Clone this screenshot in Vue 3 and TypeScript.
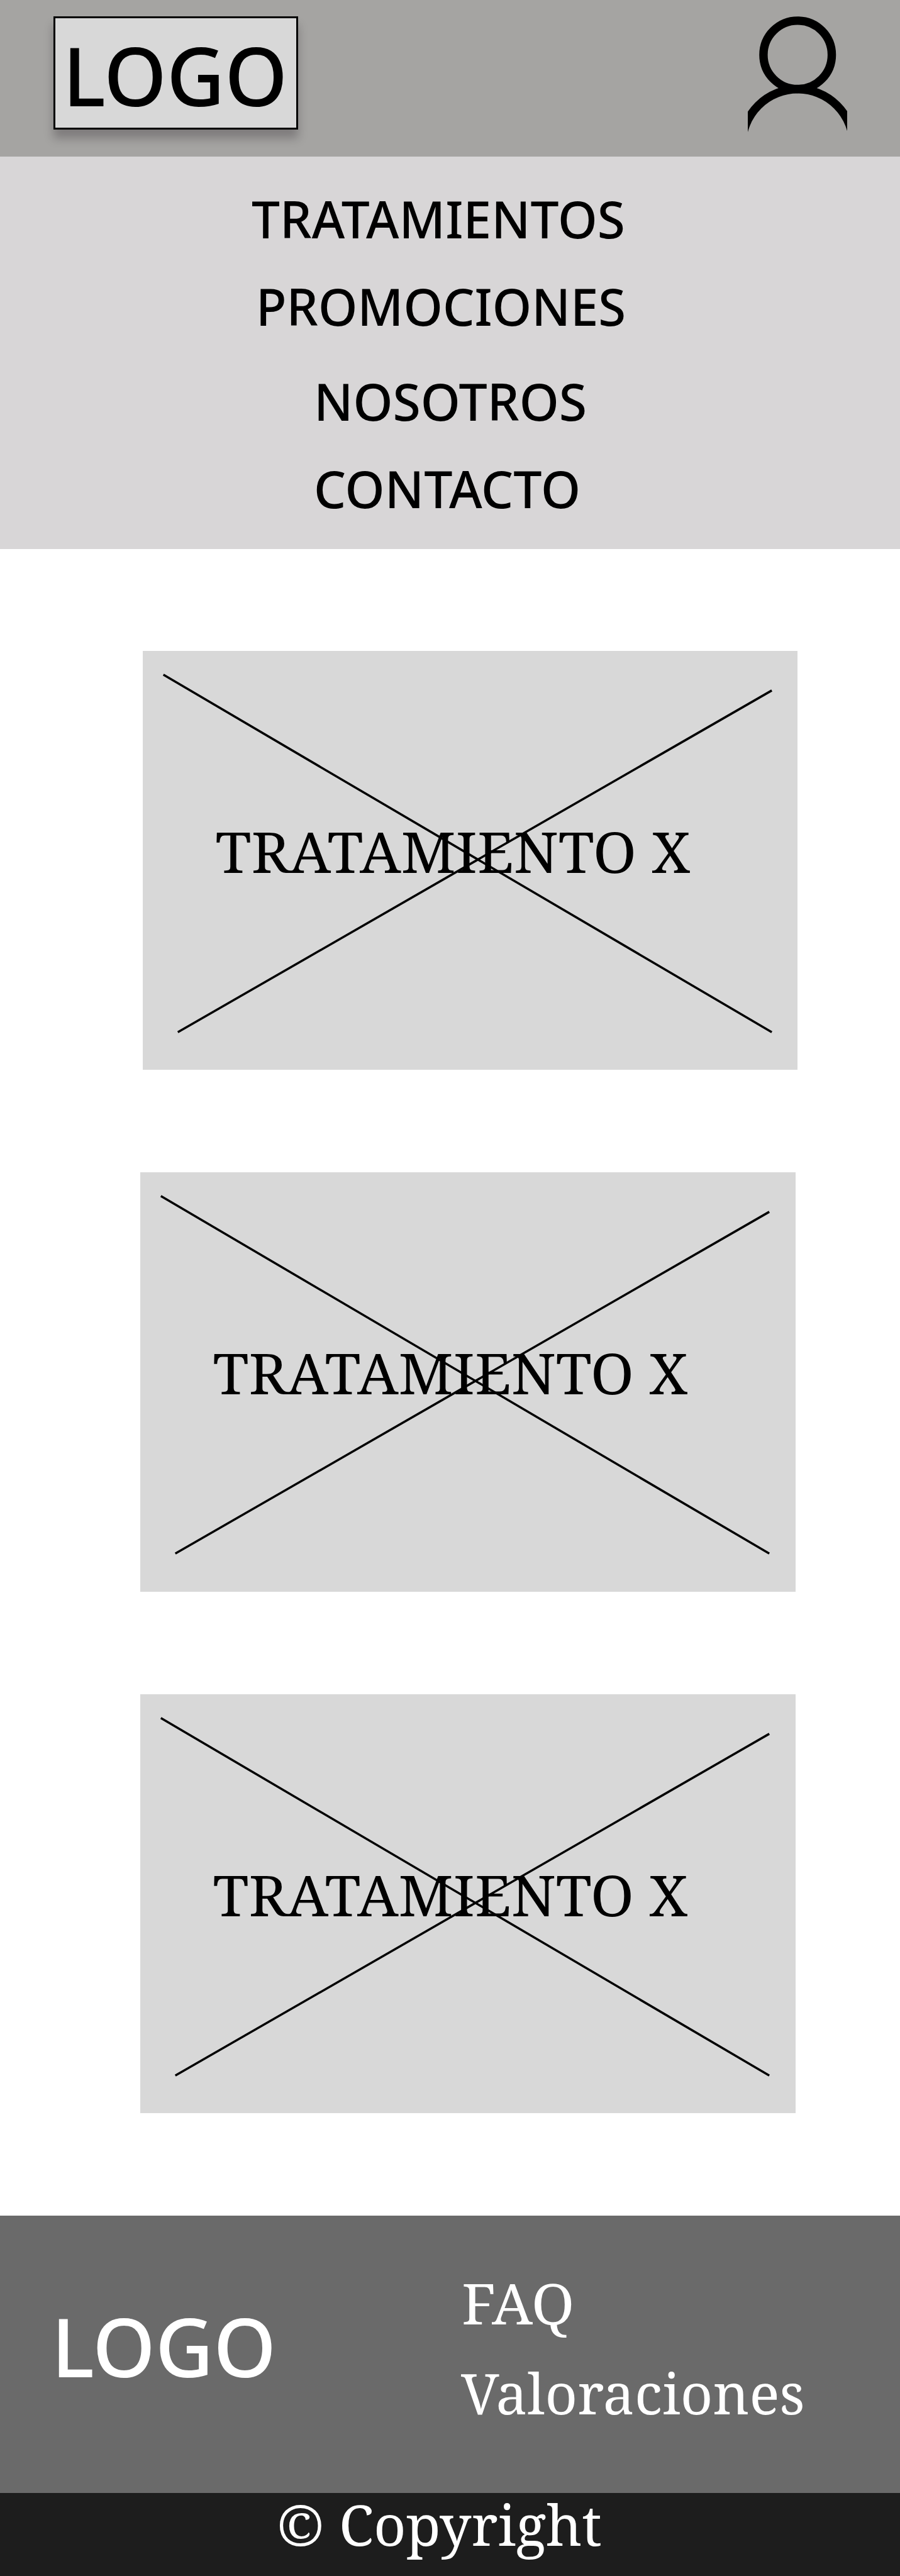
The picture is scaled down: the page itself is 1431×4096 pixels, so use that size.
<script setup lang="ts">
interface MenuItem {
  label: string
  width: number
  className: string
}

interface Treatment {
  id: number
  label: string
  lead: boolean
}

const menu: MenuItem[] = [
  { label: 'TRATAMIENTOS', width: 593.9, className: 'tratamientos' },
  { label: 'PROMOCIONES', width: 588.1, className: 'promociones' },
  { label: 'NOSOTROS', width: 434.1, className: 'nosotros' },
  { label: 'CONTACTO', width: 424.1, className: 'contacto' },
]

const treatments: Treatment[] = [
  { id: 1, label: 'TRATAMIENTO X', lead: true },
  { id: 2, label: 'TRATAMIENTO X', lead: false },
  { id: 3, label: 'TRATAMIENTO X', lead: false },
]
</script>

<template>
  <div class="page">
    <header class="header">
      <div class="logo-box">
        <svg class="label sans logo" width="357" height="173">
          <text x="0" y="139.9" textLength="357.2" lengthAdjust="spacingAndGlyphs">LOGO</text>
        </svg>
      </div>
      <svg class="user" viewBox="0 0 179 212" aria-label="Usuario">
        <circle cx="90" cy="69.5" r="61.7" />
        <circle cx="90" cy="232" r="100.5" />
      </svg>
    </header>

    <nav class="menu">
      <a v-for="item in menu" :key="item.label" :class="['menu-item', item.className]">
        <svg class="label sans" :width="item.width" height="100">
          <text x="0" y="80.5" :textLength="item.width" lengthAdjust="spacingAndGlyphs">{{ item.label }}</text>
        </svg>
      </a>
    </nav>

    <main class="treatments">
      <article v-for="t in treatments" :key="t.id" :class="['card', { lead: t.lead }]">
        <svg class="card-art serif" viewBox="0 0 1182.3 756.6" preserveAspectRatio="none">
          <line x1="37.2" y1="42.9" x2="1135.7" y2="688.3" />
          <line x1="63.3" y1="688.3" x2="1135.7" y2="71.4" />
          <text x="131.3" y="400.2" textLength="857.2" lengthAdjust="spacingAndGlyphs">{{ t.label }}</text>
        </svg>
      </article>
    </main>

    <footer class="footer">
      <svg class="label sans logo" width="357" height="173">
        <text x="0" y="140" textLength="357.2" lengthAdjust="spacingAndGlyphs">LOGO</text>
      </svg>
      <div class="links">
        <a>
          <svg class="label serif" width="179" height="100">
            <text x="1" y="80" textLength="179.4" lengthAdjust="spacingAndGlyphs">FAQ</text>
          </svg>
        </a>
        <a>
          <svg class="label serif" width="547" height="100">
            <text x="0" y="80" textLength="546.8" lengthAdjust="spacingAndGlyphs">Valoraciones</text>
          </svg>
        </a>
      </div>
    </footer>

    <div class="copyright">
      <svg class="label serif" width="517" height="110">
        <text x="0" y="84.3" textLength="516.9" lengthAdjust="spacingAndGlyphs">© Copyright</text>
      </svg>
    </div>
  </div>
</template>

<style>
body {
  margin: 0;
  background: #fff;
}
</style>

<style scoped>
.page {
  display: flex;
  flex-direction: column;
  width: 1431px;
  height: 4096px;
  overflow: hidden;
}

.label {
  display: block;
  overflow: visible;
  flex: none;
  fill: currentColor;
}

.sans {
  font-family: "Noto Sans", "Open Sans", sans-serif;
  font-weight: 480;
  font-size: 81.5px;
}

.serif {
  font-family: "Noto Serif", "DejaVu Serif", serif;
  font-weight: 440;
  font-size: 88.8px;
}

.logo {
  font-size: 129.8px;
}

.header {
  display: flex;
  justify-content: space-between;
  align-items: flex-start;
  box-sizing: border-box;
  height: 249.3px;
  padding: 25.5px 84.5px 0 84.5px;
  background: #a5a4a2;
  color: #000;
}

.logo-box {
  box-sizing: border-box;
  width: 389.2px;
  height: 180px;
  padding-left: 12.7px;
  border: 3.5px solid #000;
  background: #d8d8d8;
  box-shadow: 0 14px 14px rgba(29, 20, 29, 0.28);
}

.user {
  display: block;
  width: 157.6px;
  height: 186.7px;
  fill: none;
  stroke: #000;
  stroke-width: 15.2;
}

.menu {
  display: flex;
  flex-direction: column;
  align-items: flex-start;
  box-sizing: border-box;
  height: 623.5px;
  padding-top: 48.9px;
  background: #d8d6d7;
  color: #000;
}

.tratamientos {
  margin: 0 0 38.9px 400px;
}

.promociones {
  margin: 0 0 50.6px 407px;
}

.nosotros {
  margin: 0 0 39.8px 499.2px;
}

.contacto {
  margin-left: 498.7px;
}

.treatments {
  display: flex;
  flex-direction: column;
  gap: 162.8px;
  box-sizing: border-box;
  height: 2650.6px;
  padding: 162.2px 0 0 223.4px;
}

.card {
  width: 1041.2px;
  height: 666.5px;
  background: #d8d8d8;
}

.card.lead {
  margin-left: 3.5px;
}

.card-art {
  display: block;
  width: 100%;
  height: 100%;
  font-size: 100.8px;
  fill: #000;
}

.card-art line {
  stroke: #000;
  stroke-width: 4;
}

.footer {
  display: flex;
  align-items: flex-start;
  box-sizing: border-box;
  height: 440.4px;
  padding: 117px 0 0 82.1px;
  background: #6a6a6a;
  color: #fff;
}

.links {
  display: flex;
  flex-direction: column;
  gap: 42.7px;
  margin: -24px 0 0 293.8px;
}

.copyright {
  height: 132.2px;
  padding-left: 440.2px;
  background: #1d1d1d;
  color: #fff;
}
</style>
